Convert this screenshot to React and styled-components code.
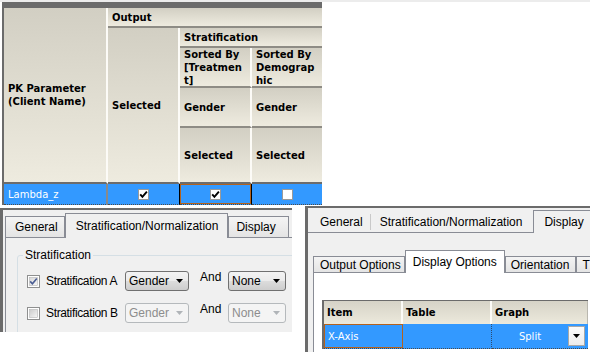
import styled, { createGlobalStyle } from "styled-components";

const GlobalStyle = createGlobalStyle`
  html, body {
    margin: 0;
    padding: 0;
    background: #fff;
  }
  #root {
    width: 590px;
    height: 352px;
    overflow: hidden;
  }
`;

const Page = styled.div`
  width: 590px;
  height: 352px;
  box-sizing: border-box;
  border-top: 2px solid #ececec;
  overflow: hidden;
  font-family: "DejaVu Sans", Verdana, sans-serif;
`;

/* ---------- parameter grid (top) ---------- */

const ParamGrid = styled.div`
  display: grid;
  width: 318px;
  margin-left: 2px;
  grid-template-columns: 104px 72px 72px 70px;
  grid-template-rows: 20px 20px 40px 40px 56px 21px;
  border-top: 6px solid #6b6b6b;
  border-left: 2px solid #6b6b6b;
  font-size: 10px;
`;

const HeadCell = styled.div`
  grid-column: ${({ $col }) => $col};
  grid-row: ${({ $row }) => $row};
  display: flex;
  align-items: center;
  padding: 0 2px 0 4px;
  background: linear-gradient(180deg, #d2cfc3 0%, #eeebdf 100%);
  border-right: ${({ $last }) => ($last ? "0" : "2px solid #fcfbf7")};
  border-bottom: 2px solid ${({ $edge }) => ($edge ? "#6c6c6c" : "#8e8c85")};
  font-weight: bold;
  line-height: 13px;
  color: #000;
  white-space: nowrap;
  overflow: hidden;
`;

const RowCell = styled.div`
  grid-row: ${({ $row }) => $row || 6};
  display: flex;
  align-items: center;
  justify-content: ${({ $center }) => ($center ? "center" : "flex-start")};
  padding-left: ${({ $center }) => ($center ? "0" : "4px")};
  background: #3399ff;
  color: #fff;
  border-bottom: 1px dotted #4a4a4a;
  border-right: ${({ $sep }) => $sep || "0"};
  box-shadow: ${({ $focus }) => ($focus ? "inset 0 0 0 1px #b4621d" : "none")};
`;

const GridCheck = styled.span`
  width: 11px;
  height: 11px;
  box-sizing: border-box;
  display: inline-flex;
  align-items: center;
  justify-content: center;
  background: #fff;
  border: 1px solid #9a9a9a;
`;

const Tick = () => (
  <svg width="9" height="9" viewBox="0 0 9 9">
    <path d="M1.2 4.4 L3.4 6.9 L7.9 1.6" fill="none" stroke="#000" strokeWidth="1.9" />
  </svg>
);

/* ---------- dialogs (bottom) ---------- */

const BottomRow = styled.div`
  display: flex;
  align-items: flex-start;
  margin-top: 1px;
  font-family: "Liberation Sans", Arial, sans-serif;
  font-size: 12px;
  color: #000;
`;

const Dialog = styled.div`
  flex: none;
  width: ${({ $w }) => $w}px;
  height: ${({ $h }) => $h}px;
  box-sizing: border-box;
  margin-top: ${({ $top }) => $top || 0}px;
  margin-left: ${({ $left }) => $left || 0}px;
  border-top: 2px solid #6b6b6b;
  border-left: 3px solid #6b6b6b;
  background: #f0f0f0;
  overflow: hidden;
`;

const TabStrip = styled.div`
  display: flex;
  align-items: flex-end;
  height: ${({ $h }) => $h}px;
  min-width: 600px;
  margin: ${({ $m }) => $m || 0};
  border-bottom: 1px solid #898c95;
`;

const Tab = styled.div`
  flex: none;
  box-sizing: border-box;
  height: ${({ $h }) => $h}px;
  margin-bottom: ${({ $active }) => ($active ? "-1px" : "0")};
  padding: ${({ $pad }) => $pad || "0 7px"};
  display: flex;
  align-items: center;
  white-space: nowrap;
  border: 1px solid #898c95;
  border-bottom: 0;
  background: ${({ $active, $bg }) =>
    $active ? $bg || "#f0f0f0" : "linear-gradient(180deg, #f4f4f4 0%, #e4e4e4 100%)"};
  position: relative;
  z-index: ${({ $active }) => ($active ? 1 : 0)};
`;

const FlatTab = styled.div`
  flex: none;
  height: 16px;
  line-height: 16px;
  margin-bottom: 2px;
  padding: ${({ $pad }) => $pad};
  white-space: nowrap;
  border-right: ${({ $sep }) => ($sep ? "1px solid #c9c9c9" : "0")};
`;

const Panel = styled.div`
  margin-left: ${({ $ml }) => $ml || 0}px;
  min-width: 420px;
  height: 200px;
  box-sizing: border-box;
  border: 1px solid #898c95;
  border-top: 0;
  background: ${({ $bg }) => $bg || "#f0f0f0"};
  padding: ${({ $pad }) => $pad};
`;

const Group = styled.fieldset`
  margin: 0;
  width: 300px;
  padding: 0 0 20px 9px;
  border: 1px solid #d5dfe5;
  border-radius: 3px;
`;

const GroupTitle = styled.legend`
  padding: 0 2px;
  margin-left: -4px;
  line-height: 14px;
`;

const OptionRow = styled.div`
  display: flex;
  align-items: center;
  height: 20px;
  margin-top: ${({ $gap }) => $gap}px;
`;

const CheckLabel = styled.span`
  flex: none;
  width: 79px;
  margin-left: 6px;
  letter-spacing: -0.35px;
  white-space: nowrap;
`;

const AndLabel = styled.span`
  flex: none;
  box-sizing: border-box;
  width: 39px;
  padding-left: 11px;
  align-self: flex-start;
  line-height: 12px;
`;

const Combo = styled.div`
  flex: none;
  width: ${({ $w }) => $w}px;
  height: 20px;
  box-sizing: border-box;
  display: flex;
  align-items: center;
  justify-content: space-between;
  padding: 0 5px 0 3px;
  border: 1px solid ${({ $off }) => ($off ? "#b5b9bc" : "#707070")};
  border-radius: 3px;
  background: ${({ $off }) =>
    $off
      ? "#f4f4f4"
      : "linear-gradient(180deg, #f3f3f3 0%, #ebebeb 48%, #dcdcdc 52%, #cdcdcd 100%)"};
  color: ${({ $off }) => ($off ? "#8d8d8d" : "#000")};
`;

const Arrow = ({ color = "#000" }) => (
  <svg width="7" height="4" viewBox="0 0 7 4">
    <polygon points="0,0 7,0 3.5,4" fill={color} />
  </svg>
);

const WinCheck = ({ checked }) => (
  <svg width="13" height="13" viewBox="0 0 13 13" style={{ flex: "none" }}>
    <defs>
      <linearGradient id={checked ? "cbOn" : "cbOff"} x1="0" y1="0" x2="1" y2="1">
        <stop offset="0" stopColor={checked ? "#d8d8d8" : "#cbcbcb"} />
        <stop offset="1" stopColor="#f7f7f7" />
      </linearGradient>
    </defs>
    <rect x="0.5" y="0.5" width="12" height="12" fill="#fff" stroke="#8e8f8f" />
    <rect x="2.5" y="2.5" width="8" height="8" fill={`url(#${checked ? "cbOn" : "cbOff"})`} stroke="#b5b5b5" strokeWidth="0.6" />
    {checked && (
      <path d="M3.2 6.4 L5.4 8.8 L9.8 3.4" fill="none" stroke="#4a5d93" strokeWidth="1.6" />
    )}
  </svg>
);

const SubArea = styled.div`
  padding: 17px 0 0 5px;
`;

const OptGrid = styled.div`
  display: grid;
  width: max-content;
  grid-template-columns: 79px 89px 96px;
  grid-template-rows: 23px 25px;
  border-top: 1px solid #6b6b6b;
  border-left: 2px solid #6b6b6b;
  font-family: "DejaVu Sans", Verdana, sans-serif;
  font-size: 10px;
`;

const OptHead = styled.div`
  display: flex;
  align-items: center;
  padding-left: 3px;
  background: linear-gradient(180deg, #d6d3c7 0%, #ece9dc 100%);
  border-right: ${({ $last }) => ($last ? "1px solid #b9b7ae" : "2px solid #fcfbf7")};
  font-weight: bold;
  color: #000;
`;

const SplitText = styled.span`
  flex: 1;
  text-align: center;
`;

const DropButton = styled.span`
  flex: none;
  width: 17px;
  height: 20px;
  box-sizing: border-box;
  margin-right: 3px;
  display: flex;
  align-items: center;
  justify-content: center;
  background: linear-gradient(180deg, #fbfbfb 0%, #ececec 100%);
  border: 1px solid #a8a8a8;
`;

export default function App() {
  return (
    <>
      <GlobalStyle />
      <Page>
        <ParamGrid>
          <HeadCell $col="1" $row="1 / 6" $edge>
            PK Parameter
            <br />
            (Client Name)
          </HeadCell>
          <HeadCell $col="2 / 5" $row="1" $last>
            Output
          </HeadCell>
          <HeadCell $col="2" $row="2 / 6" $edge>
            Selected
          </HeadCell>
          <HeadCell $col="3 / 5" $row="2" $last>
            Stratification
          </HeadCell>
          <HeadCell $col="3" $row="3">
            <span>
              Sorted By
              <br />
              [Treatmen
              <br />
              t]
            </span>
          </HeadCell>
          <HeadCell $col="4" $row="3" $last>
            <span>
              Sorted By
              <br />
              Demograp
              <br />
              hic
            </span>
          </HeadCell>
          <HeadCell $col="3" $row="4">
            Gender
          </HeadCell>
          <HeadCell $col="4" $row="4" $last>
            Gender
          </HeadCell>
          <HeadCell $col="3" $row="5" $edge>
            Selected
          </HeadCell>
          <HeadCell $col="4" $row="5" $edge $last>
            Selected
          </HeadCell>

          <RowCell $sep="2px solid #8a8a8a">Lambda_z</RowCell>
          <RowCell $center $sep="1px solid #000">
            <GridCheck>
              <Tick />
            </GridCheck>
          </RowCell>
          <RowCell $center $focus $sep="1px solid #000">
            <GridCheck>
              <Tick />
            </GridCheck>
          </RowCell>
          <RowCell $center>
            <GridCheck />
          </RowCell>
        </ParamGrid>

        <BottomRow>
          <Dialog $w={292} $h={124} $top={2}>
            <TabStrip $h={24} $m="3px 0 0 2px">
              <Tab $h={21} $pad="0 6px 0 9px">General</Tab>
              <Tab $h={25} $active $pad="0 9px 0 10px">
                Stratification/Normalization
              </Tab>
              <Tab $h={21} $pad="0 12px 0 7px">Display</Tab>
            </TabStrip>
            <Panel $ml={2} $pad="10px 0 0 11px">
              <Group>
                <GroupTitle>Stratification</GroupTitle>
                <OptionRow $gap={9}>
                  <WinCheck checked />
                  <CheckLabel>Stratification A</CheckLabel>
                  <Combo $w={64}>
                    Gender
                    <Arrow />
                  </Combo>
                  <AndLabel>And</AndLabel>
                  <Combo $w={58}>
                    None
                    <Arrow />
                  </Combo>
                </OptionRow>
                <OptionRow $gap={12}>
                  <WinCheck />
                  <CheckLabel>Stratification B</CheckLabel>
                  <Combo $w={64} $off>
                    Gender
                    <Arrow color="#b0b4b8" />
                  </Combo>
                  <AndLabel>And</AndLabel>
                  <Combo $w={58} $off>
                    None
                    <Arrow color="#b0b4b8" />
                  </Combo>
                </OptionRow>
              </Group>
            </Panel>
          </Dialog>

          <Dialog $w={285} $h={146} $left={13}>
            <TabStrip $h={24}>
              <FlatTab $pad="0 7px 0 12px" $sep>
                General
              </FlatTab>
              <FlatTab $pad="0 11px 0 9px">Stratification/Normalization</FlatTab>
              <Tab $h={23} $active $pad="0 8px 0 10px">
                Display
              </Tab>
            </TabStrip>
            <SubArea>
              <TabStrip $h={22}>
                <Tab $h={16} $pad="0 3px 0 6px">Output Options</Tab>
                <Tab $h={23} $active $bg="#fff" $pad="0 7px 0 7px">
                  Display Options
                </Tab>
                <Tab $h={16} $pad="0 6px 0 5px">Orientation</Tab>
                <Tab $h={16} $pad="0 0 0 5px">T</Tab>
              </TabStrip>
              <Panel $bg="#fff" $pad="27px 0 0 8px">
                <OptGrid>
                  <OptHead>Item</OptHead>
                  <OptHead>Table</OptHead>
                  <OptHead $last>Graph</OptHead>
                  <RowCell $row={2} $focus>
                    X-Axis
                  </RowCell>
                  <RowCell $row={2} $sep="1px dotted #2a4a70" />
                  <RowCell $row={2} $center>
                    <SplitText>Split</SplitText>
                    <DropButton>
                      <Arrow />
                    </DropButton>
                  </RowCell>
                </OptGrid>
              </Panel>
            </SubArea>
          </Dialog>
        </BottomRow>
      </Page>
    </>
  );
}
